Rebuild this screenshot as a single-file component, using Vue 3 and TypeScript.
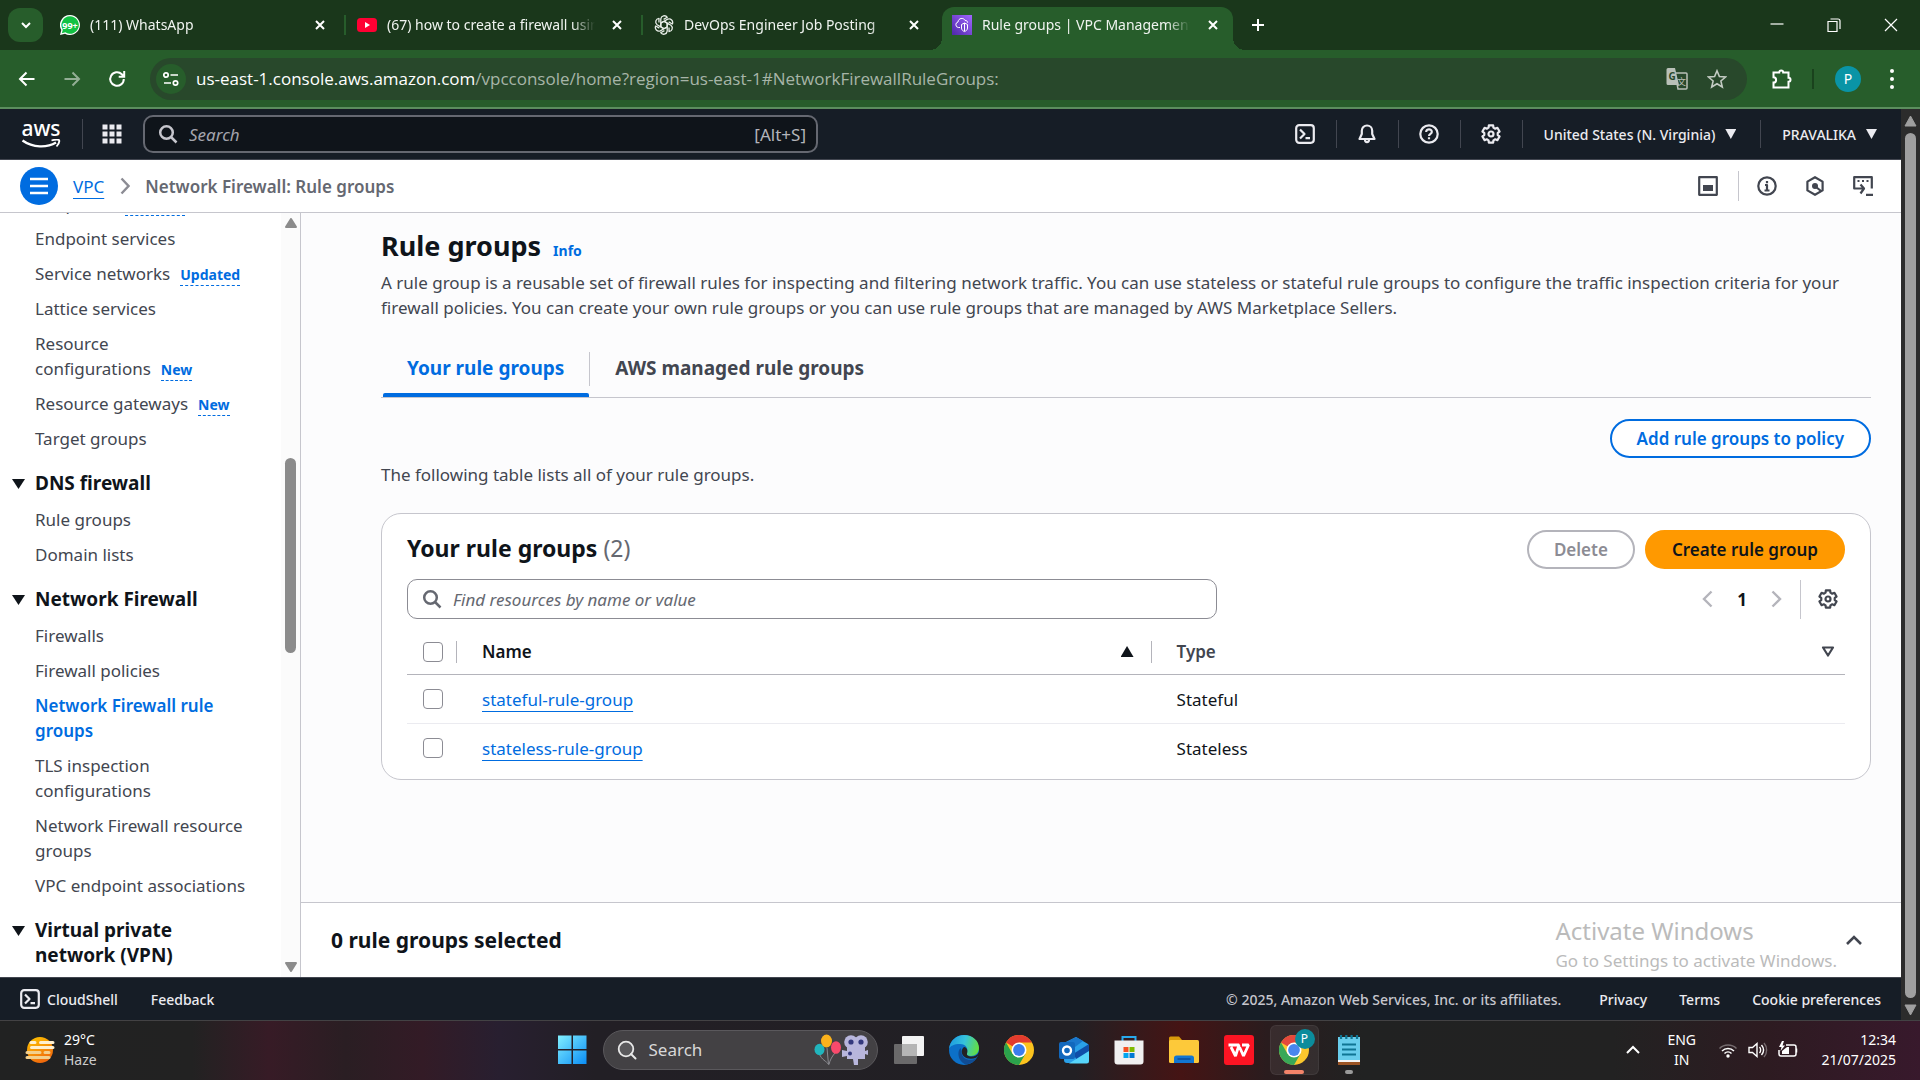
<script setup lang="ts">
import { ref } from 'vue'

interface NavItem {
  label: string
  badge?: string
  active?: boolean
}
interface NavSection {
  title: string
  items: NavItem[]
}
interface RuleGroup {
  name: string
  type: string
}

const tabs = [
  { id: 'whatsapp', title: '(111) WhatsApp' },
  { id: 'youtube', title: '(67) how to create a firewall using aws' },
  { id: 'chatgpt', title: 'DevOps Engineer Job Posting' },
  { id: 'vpc', title: 'Rule groups | VPC Management Console' },
]
const activeTab = ref('vpc')

const topItems: NavItem[] = [
  { label: 'Endpoints', badge: 'Updated' },
  { label: 'Endpoint services' },
  { label: 'Service networks', badge: 'Updated' },
  { label: 'Lattice services' },
  { label: 'Resource configurations', badge: 'New' },
  { label: 'Resource gateways', badge: 'New' },
  { label: 'Target groups' },
]

const sections: NavSection[] = [
  { title: 'DNS firewall', items: [{ label: 'Rule groups' }, { label: 'Domain lists' }] },
  {
    title: 'Network Firewall',
    items: [
      { label: 'Firewalls' },
      { label: 'Firewall policies' },
      { label: 'Network Firewall rule groups', active: true },
      { label: 'TLS inspection configurations' },
      { label: 'Network Firewall resource groups' },
      { label: 'VPC endpoint associations' },
    ],
  },
  { title: 'Virtual private network (VPN)', items: [] },
]

const ruleGroups: RuleGroup[] = [
  { name: 'stateful-rule-group', type: 'Stateful' },
  { name: 'stateless-rule-group', type: 'Stateless' },
]
const address = {
  host: 'us-east-1.console.aws.amazon.com',
  path: '/vpcconsole/home?region=us-east-1#NetworkFirewallRuleGroups:',
}
const selected = ref<string[]>([])
const resourceFilter = ref('')

// The badge stays on the same line as the last word of its label.
const leading = (label: string) => label.split(' ').slice(0, -1).map((w) => w + ' ').join('')
const lastWord = (label: string) => label.split(' ').slice(-1)[0]

// Six-toothed gear outline inside a 20 by 20 box.
function gearPath(): string {
  const points: string[] = []
  for (let k = 0; k < 6; k++) {
    const centre = -90 + 60 * k
    for (const [offset, radius] of [[-21, 6.8], [-14, 8.9], [14, 8.9], [21, 6.8]]) {
      const a = ((centre + offset) * Math.PI) / 180
      points.push(`${(10 + radius * Math.cos(a)).toFixed(2)} ${(10 + radius * Math.sin(a)).toFixed(2)}`)
    }
  }
  return `M${points.join('L')}Z`
}
const gear = gearPath()
</script>

<template>
  <div class="desktop">
    <header class="tabstrip">
      <button class="tab-search" aria-label="Search tabs">
        <svg width="12" height="12" viewBox="0 0 12 12"><path d="M2 4l4 4 4-4" class="line-w2" /></svg>
      </button>
      <div class="tabs">
        <div v-for="tab in tabs" :key="tab.id" class="tab" :class="{ active: tab.id === activeTab }">
          <svg v-if="tab.id === 'whatsapp'" class="favicon" viewBox="0 0 20 20">
            <path d="M10 0a10 10 0 1 1-5 18.700L0 20l1.300-5A10 10 0 0 1 10 0Z" fill="#fff" />
            <path d="M10 1.300a8.700 8.700 0 1 1-4.600 16L1.800 18.300 2.800 14.700A8.700 8.700 0 0 1 10 1.300Z" fill="#12c143" />
            <text x="10" y="13.500" text-anchor="middle" class="fav-text">99+</text>
          </svg>
          <svg v-else-if="tab.id === 'youtube'" class="favicon" viewBox="0 0 20 20">
            <rect y="3" width="20" height="14" rx="3.500" fill="#ff0033" />
            <path d="M8 7v6l5-3Z" fill="#fff" />
          </svg>
          <svg v-else-if="tab.id === 'chatgpt'" class="favicon" viewBox="0 0 20 20">
            <g fill="none" stroke="#e8eee8" stroke-width="1.300" stroke-linejoin="round">
              <path
                v-for="n in 6"
                :key="n"
                :transform="`rotate(${n * 60} 10 10)`"
                d="M10 6.300 6.800 8.100V3.900A3.600 3.600 0 0 1 13.300 2.300L9.600 4.400M6.800 8.100v4"
              />
            </g>
          </svg>
          <svg v-else class="favicon" viewBox="0 0 20 20">
            <defs>
              <linearGradient id="vpc" x1="0" y1="1" x2="1" y2="0">
                <stop stop-color="#4d27a8" /><stop offset="1" stop-color="#a166ff" />
              </linearGradient>
            </defs>
            <rect width="20" height="20" fill="url(#vpc)" />
            <g fill="none" stroke="#fff" stroke-width="1">
              <path d="M8 12.500H6.300A2.800 2.800 0 0 1 6 7c.3-4 5.600-4.800 7-1.600 1.600-.2 2.600 1 2.600 2.300" />
              <path d="M9.500 9.500 12.500 8l3 1.500v3.500c0 2-1.500 3-3 3.600-1.500-.6-3-1.600-3-3.600ZM12.500 8v8" />
            </g>
          </svg>
          <span class="tab-title">{{ tab.title }}</span>
          <button class="tab-close" :aria-label="`Close ${tab.title}`">
            <svg width="12" height="12" viewBox="0 0 12 12"><path d="M2 2l8 8M10 2l-8 8" class="line-w2" /></svg>
          </button>
        </div>
      </div>
      <button class="new-tab" aria-label="New tab">
        <svg width="14" height="14" viewBox="0 0 14 14"><path d="M7 1v12M1 7h12" class="line-w2" /></svg>
      </button>
      <div class="window-controls">
        <button aria-label="Minimize"><svg width="14" height="14" viewBox="0 0 14 14"><path d="M0.500 6h13" class="line-w1" /></svg></button>
        <button aria-label="Restore">
          <svg width="14" height="14" viewBox="0 0 14 14"><path d="M1 3.500h9v10H1ZM3.500 1h7.500a2 2 0 0 1 2 2v8" class="line-w1" /></svg>
        </button>
        <button aria-label="Close"><svg width="14" height="14" viewBox="0 0 14 14"><path d="M1 1l12 12M13 1L1 13" class="line-w1" /></svg></button>
      </div>
    </header>

    <div class="toolbar">
      <div class="nav-buttons">
        <button aria-label="Back"><svg width="18" height="18" viewBox="0 0 18 18"><path d="M16.500 9H2M8.500 2.500 2 9l6.500 6.500" class="line-w2" /></svg></button>
        <button aria-label="Forward" class="dim" disabled><svg width="18" height="18" viewBox="0 0 18 18"><path d="M1.500 9H16M9.500 2.500 16 9l-6.500 6.500" class="line-w2" /></svg></button>
        <button aria-label="Reload">
          <svg width="18" height="18" viewBox="0 0 18 18"><path d="M15.800 9a6.800 6.800 0 1 1-2-4.800L16 6.500M16.200 1v5.700h-5.500" class="line-w2" /></svg>
        </button>
      </div>
      <div class="omnibox">
        <button class="site-info" aria-label="View site information">
          <svg width="18" height="18" viewBox="0 0 18 18">
            <g fill="none" stroke="#fff" stroke-width="1.700"><circle cx="4" cy="5" r="2.200" /><path d="M8.500 5H16M2 13h7" /><circle cx="13.500" cy="13" r="2.200" /></g>
          </svg>
        </button>
        <span class="url">{{ address.host }}<span class="url-path">{{ address.path }}</span></span>
        <button aria-label="Translate this page" class="omni-btn">
          <svg width="22" height="22" viewBox="0 0 22 22">
            <path d="M9 5h11a1 1 0 0 1 1 1v14a1 1 0 0 1-1 1h-8Z" fill="none" stroke="#b9c0b8" stroke-width="1.500" />
            <path d="M2 0h7l4 17H2a1.500 1.500 0 0 1-1.500-1.500v-14A1.500 1.500 0 0 1 2 0Z" fill="#b9c0b8" />
            <text x="6" y="12" text-anchor="middle" class="tr-g">G</text>
            <text x="15.500" y="17" text-anchor="middle" class="tr-w">文</text>
          </svg>
        </button>
        <button aria-label="Bookmark this tab" class="omni-btn">
          <svg width="20" height="20" viewBox="0 0 20 20"><path d="M10 1.800 12.400 7.500 18.600 8 13.900 12 15.300 18 10 14.800 4.700 18 6.100 12 1.400 8 7.600 7.500Z" fill="none" stroke="#c3cbc3" stroke-width="1.600" /></svg>
        </button>
      </div>
      <button class="ext" aria-label="Extensions">
        <svg width="22" height="22" viewBox="0 0 22 22"><path d="M2.500 4.500h5.700a2 2 0 0 1 4 0h5.300v5.300a2 2 0 0 1 0 4v5.700h-15v-5a2.600 2.600 0 0 0 0-5.200Z" class="line-w2" /></svg>
      </button>
      <span class="tool-sep"></span>
      <button class="avatar">P</button>
      <button class="dots" aria-label="Chrome menu">
        <svg width="6" height="22" viewBox="0 0 6 22"><g fill="#fff"><circle cx="3" cy="3" r="2" /><circle cx="3" cy="11" r="2" /><circle cx="3" cy="19" r="2" /></g></svg>
      </button>
    </div>

    <div class="viewport">
      <div class="page">
        <nav class="aws-header">
          <a href="#" class="aws-logo" aria-label="AWS home">
            <span>aws</span>
            <svg width="40" height="10" viewBox="0 0 40 10"><path d="M1.500 1.500C12 9 26 9 35 3.500" fill="none" stroke="#fff" stroke-width="2.400" /><path d="M30.500 1.500C34 .5 37 .5 38 1c.6 1-.3 4-2.500 6.500" fill="none" stroke="#fff" stroke-width="1.800" /></svg>
          </a>
          <span class="h-sep logo-sep"></span>
          <button class="apps" aria-label="Services">
            <svg width="20" height="20" viewBox="0 0 20 20"><g fill="#ebebf0"><template v-for="r in 3" :key="r"><rect v-for="c in 3" :key="c" :x="(c - 1) * 7 + 0.5" :y="(r - 1) * 7 + 0.5" width="5" height="5" /></template></g></svg>
          </button>
          <div class="aws-search">
            <svg width="20" height="20" viewBox="0 0 20 20"><circle cx="8.500" cy="8.500" r="6.300" fill="none" stroke="#c6c6cd" stroke-width="2.500" /><path d="M13 13l5.500 5.500" stroke="#c6c6cd" stroke-width="2.500" /></svg>
            <input type="search" placeholder="Search" aria-label="Search services" />
            <span>[Alt+S]</span>
          </div>
          <div class="aws-tools">
            <button class="tool" aria-label="CloudShell"><svg width="20" height="20" viewBox="0 0 20 20"><rect x="1.200" y="1.200" width="17.600" height="17.600" rx="3" class="hi" /><path d="M5 5.500 9.500 10 5 14.500M10.500 14.200H15" class="hi" /></svg></button>
            <button class="tool" aria-label="Notifications"><svg width="20" height="20" viewBox="0 0 20 20"><path d="M10 1.500a5.200 5.200 0 0 0-5.200 5.200V10L2.500 15h15L15.200 10V6.700A5.200 5.200 0 0 0 10 1.500ZM8 15.500c0 3.500 4 3.500 4 0" class="hi" /></svg></button>
            <button class="tool" aria-label="Support"><svg width="20" height="20" viewBox="0 0 20 20"><circle cx="10" cy="10" r="8.700" class="hi" /><path d="M7.200 8c0-3.700 5.800-3.500 5.600 0-.1 2-2.800 1.800-2.800 4M10 13.300v2" class="hi" /></svg></button>
            <button class="tool" aria-label="Settings"><svg width="20" height="20" viewBox="0 0 20 20"><path :d="gear" class="hi" /><circle cx="10" cy="10" r="2.500" class="hi" /></svg></button>
            <button class="txt region">United States (N. Virginia) <i class="tri down"></i></button>
            <button class="txt account">PRAVALIKA <i class="tri down"></i></button>
          </div>
        </nav>

        <div class="crumbs">
          <button class="menu-btn" aria-label="Open navigation">
            <svg width="20" height="18" viewBox="0 0 20 18"><path d="M1 2h18M1 9h18M1 16h18" stroke="#fff" stroke-width="2.400" /></svg>
          </button>
          <a href="#" class="crumb-link">VPC</a>
          <svg class="crumb-chev" width="10" height="18" viewBox="0 0 10 18"><path d="M1.500 1.500 8.500 9l-7 7.500" fill="none" stroke="#8c8c94" stroke-width="2.400" /></svg>
          <span class="crumb-now">Network Firewall: Rule groups</span>
          <div class="crumb-tools">
            <button aria-label="Split panel"><svg width="20" height="20" viewBox="0 0 20 20"><rect x="1.200" y="1.200" width="17.600" height="17.600" class="dk" /><rect x="5" y="9" width="10" height="6" fill="#424650" /></svg></button>
            <button aria-label="Info"><svg width="20" height="20" viewBox="0 0 20 20"><circle cx="10" cy="10" r="8.700" class="dk" /><path d="M8 9h2v5.500M7.500 14.500h5M10 5v2.200" class="dk" stroke-width="2" /></svg></button>
            <button aria-label="Diagnostics"><svg width="20" height="20" viewBox="0 0 20 20"><path d="M10 1.200 17.600 5.600V14.400L10 18.800 2.400 14.400V5.600Z" class="dk" /><circle cx="10" cy="10" r="3" fill="#424650" /><path d="M11 11l5 4" class="dk" /></svg></button>
            <button aria-label="Console to code"><svg width="20" height="20" viewBox="0 0 20 20"><path d="M4 12.500H1.200V1.200H18.800V12.500M1 12.500h9.500M7.500 8.500 11 12.500 7.500 17.500M13 18.800h7" class="dk" /><path d="M4.500 5h2M9 5h2M13.500 5h2" class="dk" /></svg></button>
          </div>
        </div>

        <div class="body-row">
          <aside class="sidebar">
            <nav class="side-nav" aria-label="VPC navigation">
              <ul class="top-list">
                <li v-for="item in topItems" :key="item.label">
                  <a href="#">{{ leading(item.label) }}</a><span class="keep"><a href="#">{{ lastWord(item.label) }}</a><a v-if="item.badge" href="#" class="badge">{{ item.badge }}</a></span>
                </li>
              </ul>
              <section v-for="s in sections" :key="s.title">
                <h3><i class="tri down big"></i><span>{{ s.title }}</span></h3>
                <ul>
                  <li v-for="item in s.items" :key="item.label"><a href="#" :class="{ current: item.active }">{{ item.label }}</a></li>
                </ul>
              </section>
            </nav>
            <div class="side-scroll">
              <svg width="12" height="10" viewBox="0 0 12 10"><path d="M6 1 11 9H1Z" class="arr" /></svg>
              <div class="side-track"><div class="side-thumb"></div></div>
              <svg width="12" height="10" viewBox="0 0 12 10"><path d="M6 9 11 1H1Z" class="arr" /></svg>
            </div>
          </aside>

          <div class="main-col">
            <main>
              <div class="title-row"><h1>Rule groups</h1><a href="#" class="info">Info</a></div>
              <p class="desc">
                A rule group is a reusable set of firewall rules for inspecting and filtering network traffic. You can use stateless or stateful rule groups to configure the traffic inspection criteria for your firewall policies. You can create your own rule groups or you can use rule groups that are managed by AWS Marketplace Sellers.
              </p>
              <div class="page-tabs" role="tablist">
                <button role="tab" class="on" aria-selected="true">Your rule groups</button>
                <button role="tab" aria-selected="false">AWS managed rule groups</button>
              </div>
              <div class="add-row"><button class="btn primary-line">Add rule groups to policy</button></div>
              <p class="intro">The following table lists all of your rule groups.</p>

              <section class="card">
                <div class="card-head">
                  <h2>Your rule groups <span>({{ ruleGroups.length }})</span></h2>
                  <button class="btn muted" disabled>Delete</button>
                  <button class="btn solid">Create rule group</button>
                </div>
                <div class="filter-row">
                  <div class="filter">
                    <svg width="20" height="20" viewBox="0 0 20 20"><circle cx="8.500" cy="8.500" r="6.300" fill="none" stroke="#656871" stroke-width="2.500" /><path d="M13 13l5.500 5.500" stroke="#656871" stroke-width="2.500" /></svg>
                    <input v-model="resourceFilter" type="search" placeholder="Find resources by name or value" aria-label="Find resources" />
                  </div>
                  <div class="pager">
                    <button aria-label="Previous page"><svg width="12" height="18" viewBox="0 0 12 18"><path d="M10.500 1.500 3 9l7.500 7.500" fill="none" stroke="#b4b4bb" stroke-width="2.400" /></svg></button>
                    <button class="num">1</button>
                    <button aria-label="Next page"><svg width="12" height="18" viewBox="0 0 12 18"><path d="M1.500 1.500 9 9l-7.500 7.500" fill="none" stroke="#b4b4bb" stroke-width="2.400" /></svg></button>
                    <button class="prefs" aria-label="Preferences"><svg width="20" height="20" viewBox="0 0 20 20"><path :d="gear" class="dk" /><circle cx="10" cy="10" r="2.500" class="dk" /></svg></button>
                  </div>
                </div>
                <table>
                  <colgroup><col class="c-check" /><col class="c-name" /><col class="c-type" /></colgroup>
                  <thead>
                    <tr>
                      <th><input type="checkbox" aria-label="Select all rule groups" /></th>
                      <th><div class="th-in">Name<i class="tri up"></i></div></th>
                      <th><div class="th-in type">Type<svg width="14" height="12" viewBox="0 0 14 12"><path d="M2 1.500h10L7 9.500Z" class="dk" /></svg></div></th>
                    </tr>
                  </thead>
                  <tbody>
                    <tr v-for="g in ruleGroups" :key="g.name">
                      <td><input v-model="selected" type="checkbox" :value="g.name" :aria-label="`Select ${g.name}`" /></td>
                      <td><a href="#" class="rg">{{ g.name }}</a></td>
                      <td>{{ g.type }}</td>
                    </tr>
                  </tbody>
                </table>
              </section>
            </main>
            <section class="split-panel">
              <h2>{{ selected.length }} rule groups selected</h2>
              <button aria-label="Open panel"><svg width="18" height="12" viewBox="0 0 18 12"><path d="M2 10 9 3l7 7" fill="none" stroke="#424650" stroke-width="2.600" /></svg></button>
              <div class="watermark"><div>Activate Windows</div><p>Go to Settings to activate Windows.</p></div>
            </section>
          </div>
        </div>

        <footer class="aws-footer">
          <button class="shell"><svg width="20" height="20" viewBox="0 0 20 20"><rect x="1.200" y="1.200" width="17.600" height="17.600" rx="3" class="hi" /><path d="M5 5.500 9.500 10 5 14.500M10.500 14.200H15" class="hi" /></svg>CloudShell</button>
          <button class="feedback">Feedback</button>
          <span class="copy">© 2025, Amazon Web Services, Inc. or its affiliates.</span>
          <a href="#">Privacy</a><a href="#">Terms</a><a href="#">Cookie preferences</a>
        </footer>
      </div>
      <div class="page-scroll">
        <svg width="13" height="12" viewBox="0 0 13 12"><path d="M6.500 1 12 11H1Z" class="arr2" /></svg>
        <div class="page-thumb"></div>
        <svg width="13" height="12" viewBox="0 0 13 12"><path d="M6.500 11 12 1H1Z" class="arr2" /></svg>
      </div>
    </div>

    <div class="taskbar">
      <button class="weather">
        <svg width="30" height="28" viewBox="0 0 30 28">
          <defs><linearGradient id="sun" x1="0" y1="0" x2="0.500" y2="1"><stop stop-color="#ffc800" /><stop offset="1" stop-color="#f06a0c" /></linearGradient></defs>
          <circle cx="15" cy="14" r="13" fill="url(#sun)" />
          <g stroke-width="3" stroke-linecap="round"><path d="M6 6.500h4M15.500 6.500H28M6.500 11.500H28" stroke="#fff0cf" /><path d="M2 16.500h13M20 16.500h4M2 21.500h22" stroke="#f3cf8c" /></g>
        </svg>
        <span>29°C<br /><small>Haze</small></span>
      </button>
      <div class="task-center">
        <button class="slot" aria-label="Start">
          <svg width="30" height="30" viewBox="0 0 30 30">
            <defs><linearGradient id="win" x1="0" y1="0" x2="1" y2="1"><stop stop-color="#82f0ff" /><stop offset="1" stop-color="#0a8cf5" /></linearGradient></defs>
            <path d="M1 .500h13.500V14H1ZM16 .500h13.500V14H16ZM1 15.500h13.500V29H1ZM16 15.500h13.500V29H16Z" fill="url(#win)" />
          </svg>
        </button>
        <button class="task-search">
          <svg width="20" height="20" viewBox="0 0 20 20"><circle cx="9" cy="9" r="7.300" fill="#5a595c" stroke="#e8e8e8" stroke-width="1.800" /><path d="M14 14l4.500 4.500" stroke="#e8e8e8" stroke-width="2" stroke-linecap="round" /></svg>
          <span>Search</span>
          <svg width="54" height="32" viewBox="0 0 54 32">
            <g fill="none" stroke="#8a8a90" stroke-width="1"><path d="M5.500 20c2 6 7 7 9 10.500M13 14l1.500 16.500M22 18c-4 4-6 8-7 12.500" /></g>
            <ellipse cx="5.500" cy="15.500" rx="5" ry="5.800" fill="#21b5bd" /><ellipse cx="12.500" cy="7" rx="5.500" ry="6.500" fill="#fbb21c" /><ellipse cx="22" cy="13.500" rx="5" ry="6.300" fill="#f94a6c" />
            <g fill="#b8b6dc"><circle cx="37" cy="8" r="6.800" /><circle cx="47" cy="8" r="6.800" /><path d="M33 12h18v5l3-1v5l-3-1v5H33v-3l-5 1v-7l5 1ZM39 25h5v6h-4Z" /></g>
            <g fill="#34397d"><circle cx="37" cy="8" r="2.600" /><circle cx="47" cy="8" r="2.600" /><circle cx="36" cy="19.500" r="2" /></g>
          </svg>
        </button>
        <button class="slot" aria-label="Task view">
          <svg width="30" height="30" viewBox="0 0 30 30"><rect x="8" y="1" width="22" height="20" rx="1" fill="#f3f3f3" /><rect y="9" width="23" height="20" rx="1" fill="#777" opacity="0.850" /><rect x="8" y="9" width="15" height="12" fill="#b5b5b5" /></svg>
        </button>
        <button class="slot" aria-label="Edge">
          <svg width="30" height="30" viewBox="0 0 30 30">
            <defs><linearGradient id="edge" x1="0" y1="0.300" x2="1" y2="0.500"><stop stop-color="#1d9bdf" /><stop offset="0.500" stop-color="#36c2dc" /><stop offset="1" stop-color="#63e040" /></linearGradient></defs>
            <circle cx="15" cy="15" r="15" fill="#0c70c8" />
            <path d="M0 14C1 5 8 0 15 0c9 0 15 6 15 13 0 5-4 8-8 8-3 0-5-1-4.500-2.500C20 14 17 9 11 9 5 9 1 11 0 14Z" fill="url(#edge)" />
            <path d="M11.500 13c-4 4-2 13 4 16 5 1 9-2 12-6-7 4-14 1-15-5-.3-2 0-3.500-1-5Z" fill="#104c94" />
            <path d="M15 12c-3 2-3 7 0 9.500 3 2.500 8 3 12.500 1l2.500-3V17c-2 4-5 5-9 4.500-2-.5-3.500-1.500-3-3C19 16 18 12 15 12Z" fill="#232125" />
          </svg>
        </button>
        <button class="slot" aria-label="Chrome">
          <svg width="30" height="30" viewBox="0 0 30 30"><circle cx="15" cy="15" r="15" fill="#fcc31e" /><path d="M15 15 2 7.500A15 15 0 0 1 28 7.500H15Z" fill="#e33b2e" /><path d="M2 7.500 8.500 18.800 21.500 18.800 15 30A15 15 0 0 1 2 7.500Z" fill="#2ba24c" /><circle cx="15" cy="15" r="7.500" fill="#fff" /><circle cx="15" cy="15" r="5.900" fill="#3b7ded" /></svg>
        </button>
        <button class="slot" aria-label="Outlook">
          <svg width="30" height="30" viewBox="0 0 30 30"><path d="M5 8 17 2l12 7v17a3 3 0 0 1-3 2H8a3 3 0 0 1-3-3Z" fill="#2aa0e8" /><path d="M5 8 17 2 24 6 8 18Z" fill="#1a77cc" /><path d="M14 19 30 9v8L18 25Z" fill="#0f4ea8" /><path d="M30 16v10a2.500 2.500 0 0 1-2.500 2.500H10Z" fill="#57d5fa" /><rect y="7" width="16" height="17" rx="2" fill="#1268bd" /><circle cx="8" cy="15.500" r="4" fill="none" stroke="#fff" stroke-width="2.400" /></svg>
        </button>
        <button class="slot" aria-label="Microsoft Store">
          <svg width="30" height="30" viewBox="0 0 30 30"><path d="M8.500 6V2h13v4" fill="none" stroke="#28a9ec" stroke-width="2" /><path d="M.500 5.500h29v21a3 3 0 0 1-3 3h-23a3 3 0 0 1-3-3Z" fill="#f0f0f0" /><path d="M9.500 12h5v5h-5Z" fill="#f25022" /><path d="M15.500 12h5v5h-5Z" fill="#7fba00" /><path d="M9.500 18h5v5h-5Z" fill="#00a4ef" /><path d="M15.500 18h5v5h-5Z" fill="#0078d4" /></svg>
        </button>
        <button class="slot" aria-label="File Explorer">
          <svg width="30" height="30" viewBox="0 0 30 30"><path d="M0 3a1.500 1.500 0 0 1 1.500-1.500H10L13 5v6H0Z" fill="#d99a0b" /><rect y="5" width="30" height="23" rx="1.500" fill="#fdc93a" /><path d="M5 28v-5a2.500 2.500 0 0 1 2.500-2.500h15A2.500 2.500 0 0 1 25 23v5Z" fill="#1276d1" /><path d="M8.500 24h13" stroke="#0b4d97" stroke-width="1.500" /></svg>
        </button>
        <button class="slot" aria-label="WPS Office">
          <svg width="30" height="30" viewBox="0 0 30 30"><rect width="30" height="30" rx="3" fill="#fd1423" /><path d="M4.500 10H15L11.500 21 7 12M15.500 12 19.500 21 24.500 10H18" fill="none" stroke="#fff" stroke-width="2.800" stroke-linejoin="bevel" /></svg>
        </button>
        <button class="slot running" aria-label="Chrome, profile P">
          <svg width="30" height="30" viewBox="0 0 30 30"><circle cx="15" cy="15" r="15" fill="#fcc31e" /><path d="M15 15 2 7.500A15 15 0 0 1 28 7.500H15Z" fill="#e33b2e" /><path d="M2 7.500 8.500 18.800 21.500 18.800 15 30A15 15 0 0 1 2 7.500Z" fill="#2ba24c" /><circle cx="15" cy="15" r="7.500" fill="#fff" /><circle cx="15" cy="15" r="5.900" fill="#3b7ded" /></svg>
          <span class="profile">P</span>
        </button>
        <button class="slot open" aria-label="Notepad">
          <svg width="30" height="30" viewBox="0 0 30 30"><path d="M4 27h22v3H4Z" fill="#9b5424" /><path d="M4 2h22v24H4Z" fill="#68cdec" /><path d="M4 25h22v2H4Z" fill="#f5f5f5" /><path d="M8 9.500h14M8 14.500h14M8 19.500h14" stroke="#0f7593" stroke-width="1.800" /><path d="M7 0v4M12.300 0v4M17.600 0v4M23 0v4" stroke="#0f7593" stroke-width="2.200" /></svg>
        </button>
      </div>
      <div class="tray">
        <button aria-label="Show hidden icons"><svg width="14" height="10" viewBox="0 0 14 10"><path d="M1 8 7 2l6 6" class="line-w2" /></svg></button>
        <button class="lang">ENG<br />IN</button>
        <button class="status" aria-label="Network, volume and battery">
          <svg width="20" height="16" viewBox="0 0 20 16"><g fill="none" stroke="#fff" stroke-width="1.500"><path d="M1.500 6.500a12 12 0 0 1 17 0" opacity="0.350" /><path d="M4 9a8.500 8.500 0 0 1 12 0M6.500 11.500a5 5 0 0 1 7 0" /></g><circle cx="10" cy="14" r="1.700" fill="#fff" /></svg>
          <svg width="20" height="18" viewBox="0 0 20 18"><g fill="none" stroke="#fff" stroke-width="1.400"><path d="M1 6.500h3.500L9 2.500v13l-4.500-4H1ZM11.500 6c1.500 1.500 1.500 4.500 0 6M13.500 4c2.500 3 2.500 7 0 10" /><path d="M16 2c3.500 4 3.500 10 0 14" opacity="0.350" /></g></svg>
          <svg width="20" height="18" viewBox="0 0 20 18"><path d="M8 4h8a2 2 0 0 1 2 2v7a2 2 0 0 1-2 2H3a2 2 0 0 1-2-2V9M18.500 7.500v4" fill="none" stroke="#fff" stroke-width="1.500" /><path d="M4 0 1 6h2.500L2.500 10 7 4.500H4.500L6 0ZM4 10l5-4h2v7H4Z" fill="#fff" /></svg>
        </button>
        <button class="clock">12:34<br />21/07/2025</button>
      </div>
    </div>
  </div>
</template>

<style>
body { margin: 0; }
</style>

<style scoped>
* { box-sizing: border-box; }
.desktop {
  display: flex;
  flex-direction: column;
  height: 100vh;
  overflow: hidden;
  font-family: "Noto Sans", "Open Sans", "Noto Sans CJK SC", sans-serif;
  font-size: 17px;
  line-height: 25px;
  color: #424650;
}
button {
  padding: 0;
  border: 0;
  background: none;
  color: inherit;
  font: inherit;
  display: flex;
  align-items: center;
  justify-content: center;
  flex: none;
}
input { font: inherit; color: inherit; }
a { color: inherit; text-decoration: none; }
h1, h2, h3, p, ul { margin: 0; padding: 0; }
ul { list-style: none; }
svg { flex: none; display: block; }
.line-w2 { fill: none; stroke: #fff; stroke-width: 2; }
.line-w1 { fill: none; stroke: #fff; stroke-width: 1.2; }
.hi { fill: none; stroke: #ebebf0; stroke-width: 2.2; stroke-linejoin: round; }
.dk { fill: none; stroke: #424650; stroke-width: 2.2; stroke-linejoin: round; }
.arr { fill: #8b8b8b; stroke: #8b8b8b; stroke-linejoin: round; stroke-width: 2; }
.arr2 { fill: #9f9f9f; stroke: #9f9f9f; stroke-linejoin: round; stroke-width: 1; }

/* browser tab strip */
.tabstrip { display: flex; align-items: center; height: 50px; background: #1a371b; color: #f0f4f0; flex: none; }
.tab-search { width: 35px; height: 34px; margin: 0 4px 0 8px; border-radius: 12px; background: #275d2b; }
.tabs { display: flex; align-self: stretch; min-width: 0; flex: 0 1 1189px; }
.tab { position: relative; display: flex; align-items: center; flex: 0 1 297px; min-width: 0; padding: 7px 18px 7px 13px; }
.tab + .tab:not(.active)::before { content: ""; position: absolute; left: 0; top: 15px; width: 2px; height: 20px; background: #275d2b; }
.tab.active { background: #275d2b; margin: 7px 3px 0 4px; padding: 0 14px 7px 10px; flex-basis: 291px; border-radius: 12px 12px 0 0; }
.tab.active::before, .tab.active::after { content: ""; position: absolute; bottom: 0; width: 12px; height: 12px; }
.tab.active::before { left: -12px; background: radial-gradient(circle at 0 0, transparent 12px, #275d2b 12px); }
.tab.active::after { right: -12px; background: radial-gradient(circle at 100% 0, transparent 12px, #275d2b 12px); }
.favicon { width: 20px; height: 20px; margin-right: 10px; }
.fav-text { font-size: 9px; font-weight: 700; fill: #fff; }
.tab-title { flex: 1; overflow: hidden; white-space: nowrap; font-size: 14px; line-height: 20px; -webkit-mask-image: linear-gradient(90deg, #000 185px, transparent 208px); mask-image: linear-gradient(90deg, #000 185px, transparent 208px); }
.tab-close { width: 12px; height: 20px; margin-left: 16px; }
.new-tab { width: 30px; height: 30px; margin-left: 7px; }
.window-controls { display: flex; gap: 43px; margin-left: auto; padding-right: 22px; }

/* browser toolbar */
.toolbar { display: flex; align-items: center; height: 59px; padding: 0 25px 0 18px; background: #275d2b; border-bottom: 2px solid #5b8e5e; flex: none; color: #fff; }
.nav-buttons { display: flex; gap: 27px; }
.nav-buttons .dim { opacity: 0.5; }
.omnibox { flex: 1; display: flex; align-items: center; min-width: 0; height: 42px; margin: 0 24px; border-radius: 21px; background: #28482b; padding: 0 20px 0 6px; }
.site-info { width: 30px; height: 30px; border-radius: 50%; background: #275d2b; }
.url { flex: 1; margin-left: 10px; font-family: "Open Sans", "Noto Sans", sans-serif; font-size: 17px; white-space: nowrap; overflow: hidden; }
.url-path { color: #a7b5a8; }
.omni-btn { margin-left: 19px; }
.tr-g { font-size: 10px; font-weight: 700; fill: #28482b; }
.tr-w { font-size: 9px; fill: #b9c0b8; }
.tool-sep { width: 2px; height: 20px; margin: 0 21px 0 19px; background: #1a421d; }
.avatar { width: 26px; height: 26px; border-radius: 50%; background: #0a94a6; font-size: 14px; }
.dots { margin-left: 28px; }

.viewport { flex: 1; display: flex; min-height: 0; }
.page { flex: 1; min-width: 0; display: flex; flex-direction: column; background: #fcfcfd; }
.page-scroll { flex: none; width: 19px; display: flex; flex-direction: column; align-items: center; gap: 6px; padding: 6px 0 4px; background: #2c2c2c; }
.page-thumb { flex: 1; width: 11px; border-radius: 6px; background: #9f9f9f; }

/* console header */
.aws-header { display: flex; align-items: center; height: 51px; padding: 0 24px 0 20px; background: #161d26; border-bottom: 1px solid #424650; color: #ebebf0; flex: none; }
.aws-logo { display: flex; flex-direction: column; align-items: center; width: 42px; color: #fff; }
.aws-logo span { font-size: 21px; line-height: 16px; font-weight: 500; }
.aws-logo svg { margin-top: 3px; }
.h-sep { width: 1px; height: 30px; background: #424650; }
.logo-sep { margin: 0 19px 0 20px; }
.aws-search { display: flex; align-items: center; flex: 0 1 675px; height: 38px; margin-left: 21px; padding: 0 10px 0 13px; border: 2px solid #656871; border-radius: 10px; background: #0f141a; color: #b4b4bb; }
.aws-search input { flex: 1; min-width: 0; border: 0; outline: 0; background: none; padding: 0 11px; }
.aws-search input::placeholder { color: #a4a4ad; font-style: italic; opacity: 1; }
.aws-tools { display: flex; align-items: center; margin-left: auto; font-size: 14px; font-weight: 500; }
.aws-tools button { height: 28px; }
.aws-tools .tool { width: 62px; }
.aws-tools button + button { border-left: 1px solid #424650; }
.aws-tools .region { padding: 0 24px 0 21px; }
.aws-tools .account { padding-left: 21px; }
.tri { display: inline-block; width: 11px; height: 10px; background: currentColor; margin-left: 10px; flex: none; }
.tri.down { clip-path: polygon(0 0, 100% 0, 50% 100%); }
.tri.up { clip-path: polygon(0 100%, 100% 100%, 50% 0); width: 13px; height: 11px; }

/* breadcrumbs */
.crumbs { display: flex; align-items: center; height: 53px; padding: 0 28px 0 20px; background: #fff; border-bottom: 1px solid #c6c6cd; flex: none; }
.menu-btn { width: 38px; height: 38px; border-radius: 50%; background: #006ce0; margin-right: 15px; }
.crumb-link, .rg { color: #006ce0; text-decoration: underline; text-decoration-thickness: 1px; text-underline-offset: 5px; }
.crumb-chev { margin: 0 15px 0 16px; }
.crumb-now { font-weight: 600; color: #656871; }
.crumb-tools { display: flex; align-items: center; margin-left: auto; gap: 28px; }
.crumb-tools button:first-child { padding-right: 20px; margin-right: -10px; height: 30px; border-right: 1px solid #c6c6cd; }

/* side navigation */
.body-row { flex: 1; display: flex; min-height: 0; }
.sidebar { flex: none; display: flex; width: 301px; background: #fff; border-right: 1px solid #c6c6cd; overflow: hidden; }
.side-nav { flex: 1; min-width: 0; padding: 0 30px 0 12px; overflow: hidden; }
.side-nav ul { padding-left: 23px; display: flex; flex-direction: column; gap: 10px; }
.side-nav .top-list { margin-top: -22px; }
.keep { white-space: nowrap; }
.side-nav a.current { color: #006ce0; font-weight: 600; }
.side-nav a.badge { margin-left: 10px; padding-bottom: 1px; font-size: 14px; line-height: 20px; font-weight: 700; color: #006ce0; border-bottom: 1px dashed #006ce0; }
.side-nav h3 { display: flex; margin: 20px 0 11px; font-size: 19px; line-height: 25px; color: #0f141a; font-weight: 700; }
.side-nav h3 .tri { flex: none; width: 13px; height: 10px; margin: 8px 10px 0 0; }
.side-scroll { flex: none; width: 19px; display: flex; flex-direction: column; align-items: center; padding: 5px 0; background: #fbfbfb; }
.side-track { flex: 1; width: 11px; display: flex; flex-direction: column; }
.side-thumb { height: 26.500%; margin-top: 230px; border-radius: 6px; background: #8b8b8b; }

/* main column */
.main-col { flex: 1; min-width: 0; display: flex; flex-direction: column; background: #fcfcfd; }
main { flex: 1; min-height: 0; padding: 14px 30px 0 80px; }
.title-row { display: flex; align-items: baseline; gap: 12px; margin-bottom: 5px; }
h1 { font-size: 27px; line-height: 38px; color: #0f141a; font-weight: 700; }
.info { color: #006ce0; font-size: 14px; font-weight: 700; }
.page-tabs { display: flex; margin-top: 20px; border-bottom: 1px solid #c6c6cd; }
.page-tabs button { position: relative; height: 57px; padding: 0 25px 0 26px; font-size: 19px; font-weight: 700; }
.page-tabs .on { color: #006ce0; }
.page-tabs .on::after { content: ""; position: absolute; left: 2px; right: 0; bottom: 0; height: 4px; border-radius: 2px 2px 0 0; background: #006ce0; }
.page-tabs button + button::before { content: ""; position: absolute; left: 0; top: 12px; height: 34px; width: 1px; background: #c6c6cd; }
.add-row { display: flex; justify-content: flex-end; margin-top: 21px; }
.btn { height: 39px; padding: 0 25px; border: 2px solid; border-radius: 20px; font-weight: 600; background: #fff; }
.primary-line { color: #006ce0; }
.muted { border-color: #b4b4bb; color: #8c8c94; }
.solid { background: #ff9900; border-color: #ff9900; color: #0f141a; margin-left: 10px; }
.intro { margin-top: 4px; }
.card { margin-top: 26px; padding: 16px 25px 7px; background: #fff; border: 1px solid #c6c6cd; border-radius: 20px; }
.card-head { display: flex; align-items: center; }
.card-head h2, .split-panel h2 { flex: 1; font-size: 21px; line-height: 30px; color: #0f141a; font-weight: 700; }
.card-head h2 { font-size: 23px; padding-bottom: 4px; }
.card-head h2 span { font-weight: 400; color: #656871; }
.filter-row { display: flex; align-items: center; justify-content: space-between; margin-top: 10px; }
.filter { display: flex; align-items: center; width: 56.300%; height: 40px; padding: 0 14px; border: 1px solid #8c8c94; border-radius: 10px; background: #fff; }
.filter input { flex: 1; min-width: 0; border: 0; outline: 0; background: none; padding: 0 11px; }
.filter input::placeholder { color: #656871; font-style: italic; opacity: 1; }
.pager { display: flex; align-items: center; padding-right: 7px; }
.pager .num { width: 58px; font-weight: 700; font-size: 17px; color: #0f141a; }
.pager .prefs { height: 39px; margin-left: 17px; padding-left: 17px; border-left: 1px solid #c6c6cd; }
table { width: 100%; table-layout: fixed; border-collapse: separate; border-spacing: 0; margin-top: 10px; color: #0f141a; }
.c-check { width: 50px; }
.c-name { width: 48.300%; }
th, td { padding: 0 0 0 25px; text-align: left; }
th { height: 46px; position: relative; font-weight: 600; border-bottom: 1px solid #b4b4bb; }
th:first-child, td:first-child { padding-left: 16px; }
th + th::before { content: ""; position: absolute; left: -1px; top: 12px; width: 1px; height: 22px; background: #b4b4bb; }
.th-in { display: flex; align-items: center; justify-content: space-between; padding-right: 18px; }
.th-in.type { color: #424650; padding-right: 10px; }
td { height: 49px; }
tbody tr:not(:last-child) td { border-bottom: 1px solid #ebebf0; }
tbody tr:last-child td { height: 48px; }
input[type="checkbox"] { appearance: none; display: block; width: 20px; height: 20px; margin: 0; border: 1px solid #8c8c94; border-radius: 4px; background: #fff; }
.split-panel { position: relative; display: flex; align-items: center; height: 75px; flex: none; padding: 0 38px 0 30px; background: #fff; border-top: 1px solid #c6c6cd; }
.watermark { position: absolute; right: 64px; top: 10px; color: #bbb; pointer-events: none; }
.watermark div { font-size: 24px; line-height: 36px; }
.watermark p { white-space: nowrap; line-height: 24px; }

/* console footer */
.aws-footer { display: flex; align-items: center; height: 43px; padding: 0 20px; background: #161d26; border-top: 1px solid #424650; color: #ebebf0; font-size: 14px; flex: none; font-weight: 500; }
.shell { gap: 7px; }
.feedback { margin-left: 33px; }
.copy { margin-left: auto; color: #c6c6cd; }
.aws-footer a { margin-left: 32px; }
.aws-footer .copy + a { margin-left: 38px; }

/* windows taskbar */
.taskbar { display: grid; grid-template-columns: 1fr auto 1fr; align-items: center; height: 60px; flex: none; border-top: 1px solid #434244; color: #fff; font-size: 14px; line-height: 20px; padding-bottom: 1px;
  background: linear-gradient(90deg, #212222 0, #222 10%, #371b26 14%, #2a1e23 18%, #331b26 22%, #281f30 26%, #221f25 31%, #222024 56%, #451414 61.500%, #2a1c1e 66%, #212222 71%, #222 84%, #2d1b21 92%, #38192c 100%); }
.weather { justify-self: start; margin-left: 25px; gap: 9px; text-align: left; }
.weather small { font-size: 14px; color: #ccc; }
.task-center { display: flex; align-items: center; padding-left: 1px; }
.slot { position: relative; width: 55px; height: 50px; }
.task-search { width: 275px; height: 40px; margin: 0 4px 0 3px; padding: 0 9px 0 13px; border: 1px solid #5a585c; border-radius: 20px; background: #434144; font-size: 17px; color: #d8d8d8; }
.task-search span { flex: 1; text-align: left; margin-left: 12px; }
.running::before { content: ""; position: absolute; inset: 0 3px; border-radius: 6px; background: rgba(255, 255, 255, 0.07); border: 1px solid rgba(255, 255, 255, 0.06); }
.running::after { content: ""; position: absolute; bottom: 1px; width: 20px; height: 4px; border-radius: 2px; background: #f4846a; }
.open::after { content: ""; position: absolute; bottom: 1px; width: 8px; height: 4px; border-radius: 2px; background: #9a9a9a; }
.profile { position: absolute; right: 7px; top: 4px; width: 20px; height: 20px; border-radius: 50%; background: #0b8c9c; font-size: 12px; }
.tray { justify-self: end; display: flex; align-items: center; margin-right: 24px; }
.lang { margin-left: 27px; }
.status { gap: 10px; margin: 0 20px 0 22px; }
.clock { min-width: 78px; text-align: right; justify-content: flex-end; }
</style>
